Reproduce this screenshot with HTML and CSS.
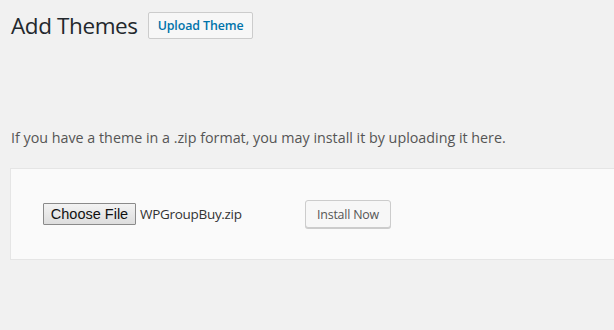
FILE: index.html
```html
<!DOCTYPE html>
<html>
<head>
<meta charset="utf-8">
<link rel="stylesheet" href="styles.css">
</head>
<body>
<div class="wrap">
  <div class="header">
    <h1 class="title">Add Themes</h1>
    <button class="upload-btn">Upload Theme</button>
  </div>
  <p class="help">If you have a theme in a .zip format, you may install it by uploading it here.</p>
  <div class="form">
    <div class="file-input">
      <span class="choose">Choose File</span>
      <span class="filename">WPGroupBuy.zip</span>
    </div>
    <button class="install">Install Now</button>
  </div>
</div>
</body>
</html>
```
FILE: styles.css
```css
html, body {
  margin: 0;
  padding: 0;
  background: #f1f1f1;
}
body {
  font-family: "Open Sans", "Noto Sans", sans-serif;
  color: #444;
  overflow: hidden;
}
.wrap {
  padding: 12px 0 0 10px;
}
.header {
  display: flex;
  align-items: center;
  gap: 10px;
}
.title {
  margin: 0;
  font-weight: 400;
  font-size: 22.5px;
  line-height: 26px;
  color: #23282d;
  padding-left: 1px;
  letter-spacing: -0.4px;
}
.upload-btn {
  height: 27px;
  padding: 0 9px;
  background: #f7f7f7;
  border: 1px solid #ccc;
  border-radius: 2px;
  color: #0073aa;
  font-family: "Open Sans", sans-serif;
  font-weight: 600;
  font-size: 12.4px;
  letter-spacing: -0.1px;
}
.help {
  margin: 89px 0 0 1px;
  font-size: 14.3px;
  line-height: 20px;
  color: #555;
}
.form {
  margin-top: 20px;
  height: 90px;
  background: #fafafa;
  border: 1px solid #e5e5e5;
  border-right: none;
  display: flex;
  align-items: center;
  padding-left: 32px;
}
.file-input {
  display: flex;
  align-items: center;
  width: 262px;
}
.choose {
  box-sizing: border-box;
  width: 93px;
  height: 22px;
  display: flex;
  align-items: center;
  justify-content: center;
  background: linear-gradient(#f3f3f3, #dddddd);
  border: 1px solid #8a8a8a;
  border-radius: 1px;
  font-family: "Liberation Sans", Arial, sans-serif;
  font-size: 14.5px;
  color: #111;
}
.filename {
  margin-left: 4px;
  font-family: "Open Sans", sans-serif;
  font-size: 13.5px;
  color: #333;
  letter-spacing: -0.3px;
}
.install {
  height: 28px;
  width: 86px;
  padding: 0;
  background: #f7f7f7;
  border: 1px solid #ccc;
  border-radius: 3px;
  box-shadow: 0 1px 0 #ccc;
  color: #555;
  font-family: "Open Sans", sans-serif;
  font-size: 12.4px;
  letter-spacing: -0.2px;
}
```
